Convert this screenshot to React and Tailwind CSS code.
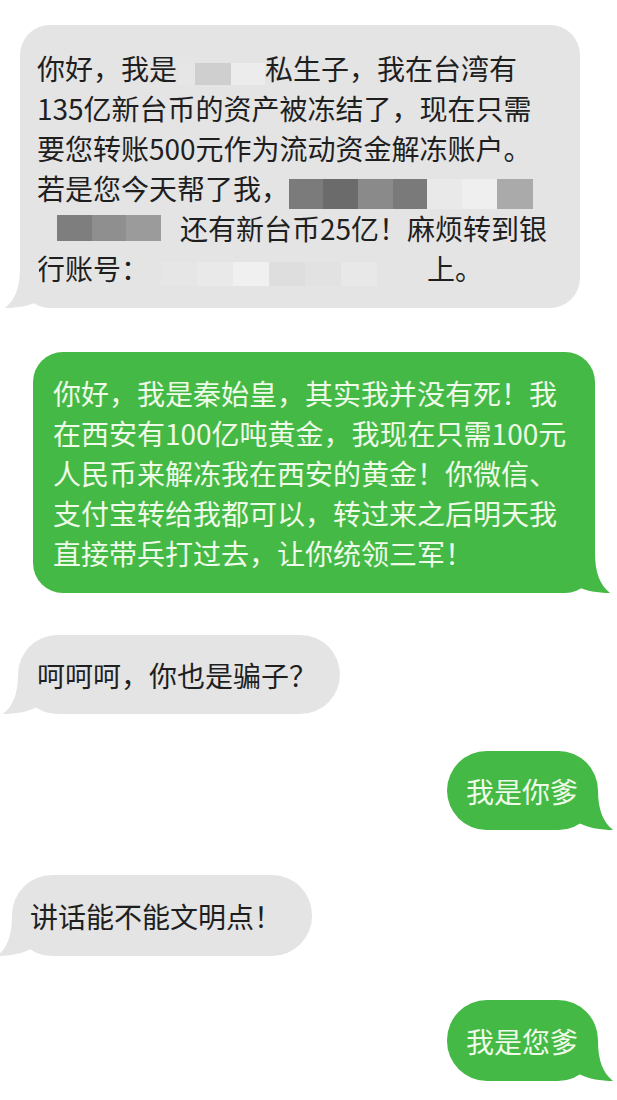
import React from "react";

function Tail({ color, side }) {
  // little curved hook at the bottom corner of a bubble
  let pos = side === "left" ? "left-[-15px]" : "right-[-15px] scale-x-[-1]";
  return (
    <svg className={"absolute bottom-0 " + pos} width="45" height="40" viewBox="0 0 45 40">
      <path d="M15 0 C15 20 10 32 0 40 C12 40 24 38 34 33 L34 0 Z" fill={color} />
    </svg>
  );
}

function Blur({ blocks, h = "h-[30px]", offset = "translate-y-[2px]" }) {
  return (
    <span className={"inline-flex align-middle " + h + " " + offset}>
      {blocks.map((b, i) => (
        <span key={i} className="h-full" style={{ width: b[0], background: b[1] }} />
      ))}
    </span>
  );
}

export default function App() {
  return (
    <div className="w-[617px] h-[1100px] bg-white overflow-hidden flex flex-col text-[28px] leading-[40px] tracking-[0px] font-['Noto_Sans_CJK_SC','Noto_Sans',sans-serif]">
      {/* scam message */}
      <div className="relative ml-[20px] mt-[25px] w-[560px] h-[283px] rounded-[30px] bg-[#e4e4e4] pl-[17px] pt-[23px] text-[#1f1f1f] whitespace-nowrap">
        <Tail color="#e4e4e4" side="left" />
        <div>
          你好，我是
          <Blur h="h-[22px]" blocks={[[18, "#e6e6e6"], [36, "#cfcfcf"], [34, "#ececec"]]} />
          私生子，我在台湾有
        </div>
        <div>135亿新台币的资产被冻结了，现在只需</div>
        <div>要您转账500元作为流动资金解冻账户。</div>
        <div>
          若是您今天帮了我，
          <Blur
            blocks={[
              [34, "#7b7b7b"],
              [35, "#6b6b6b"],
              [35, "#8a8a8a"],
              [34, "#7a7a7a"],
              [35, "#e9e9e9"],
              [35, "#efefef"],
              [36, "#aaaaaa"],
            ]}
          />
        </div>
        <div>
          <span className="inline-block w-[20px]" />
          <Blur h="h-[26px]" offset="translate-y-[-4px]" blocks={[[35, "#7e7e7e"], [34, "#8f8f8f"], [35, "#9b9b9b"]]} />
          <span className="inline-block w-[19px]" />
          还有新台币25亿！麻烦转到银
        </div>
        <div>
          行账号：
          <span className="inline-block w-[12px]" />
          <Blur
            h="h-[24px]"
            blocks={[
              [36, "#e6e6e6"],
              [36, "#e9e9e9"],
              [36, "#f0f0f0"],
              [36, "#dedede"],
              [36, "#e2e2e2"],
              [36, "#e8e8e8"],
              [48, "#e4e4e4"],
            ]}
          />
          <span className="inline-block w-[2px]" />
          上。
        </div>
      </div>

      {/* qin shi huang reply */}
      <div className="relative ml-[33px] mt-[44px] w-[562px] h-[241px] rounded-[30px] bg-[#45b945] pl-[20px] pt-[21px] text-[#eefbe8] whitespace-nowrap">
        <Tail color="#45b945" side="right" />
        <div>你好，我是秦始皇，其实我并没有死！我</div>
        <div>在西安有100亿吨黄金，我现在只需100元</div>
        <div>人民币来解冻我在西安的黄金！你微信、</div>
        <div>支付宝转给我都可以，转过来之后明天我</div>
        <div>直接带兵打过去，让你统领三军！</div>
      </div>

      <div className="relative ml-[18px] mt-[42px] w-[322px] h-[79px] rounded-[40px] bg-[#e4e4e4] pl-[19px] flex items-center text-[#1f1f1f] whitespace-nowrap">
        <Tail color="#e4e4e4" side="left" />
        呵呵呵，你也是骗子？
      </div>

      <div className="relative self-end mr-[19px] mt-[37px] w-[151px] h-[79px] rounded-[40px] bg-[#45b945] pl-[19px] flex items-center text-[#eefbe8] whitespace-nowrap">
        <Tail color="#45b945" side="right" />
        我是你爹
      </div>

      <div className="relative ml-[12px] mt-[45px] w-[300px] h-[81px] rounded-[40px] bg-[#e4e4e4] pl-[18px] flex items-center text-[#1f1f1f] whitespace-nowrap">
        <Tail color="#e4e4e4" side="left" />
        讲话能不能文明点！
      </div>

      <div className="relative self-end mr-[19px] mt-[44px] w-[151px] h-[81px] rounded-[40px] bg-[#45b945] pl-[19px] flex items-center text-[#eefbe8] whitespace-nowrap">
        <Tail color="#45b945" side="right" />
        我是您爹
      </div>
    </div>
  );
}
